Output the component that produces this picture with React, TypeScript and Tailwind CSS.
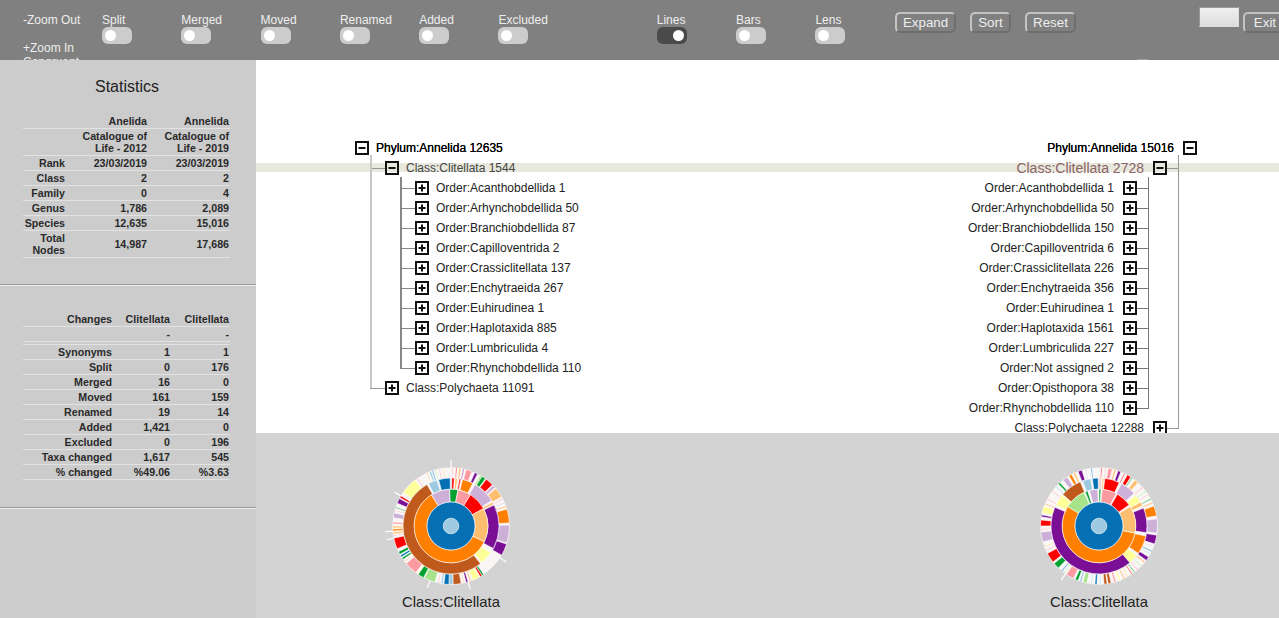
import React from 'react';

const FONT = 'font-["Liberation_Sans",Arial,sans-serif]';

const C: Record<string, string> = {
  b: '#0570b4', l: '#9ecae1', g: '#00a030', n: '#a6e38a', k: '#fb9aa0', r: '#ff0000',
  o: '#ff7f00', y: '#fdbf6f', v: '#cdb0d8', p: '#7a0f96', w: '#ffff99', x: '#c05a1c', e: '#f9f6f6',
};

type Seg = [number, number, string];

// annular sector, angles in degrees clockwise from 12 o'clock
function arc(r0: number, r1: number, a0: number, a1: number) {
  const pt = (r: number, a: number) => {
    const t = (a * Math.PI) / 180;
    return `${(r * Math.sin(t)).toFixed(2)} ${(-r * Math.cos(t)).toFixed(2)}`;
  };
  const large = a1 - a0 > 180 ? 1 : 0;
  return `M${pt(r1, a0)}A${r1} ${r1} 0 ${large} 1 ${pt(r1, a1)}L${pt(r0, a1)}A${r0} ${r0} 0 ${large} 0 ${pt(r0, a0)}Z`;
}

const LEFT_TWO: Seg[] = [[115, 328, 'o'], [328, 358, 'v'], [358, 371, 'g'], [371, 392, 'k'], [392, 422, 'r'], [422, 475, 'y']];
const LEFT_THREE: Seg[] = [
  [142, 330, 'x'], [332, 343, 'l'], [345, 359, 'b'], [361, 364, 'r'], [365, 368, 'y'], [370, 372, 'r'],
  [374, 387, 'o'], [390, 418, 'v'], [420, 423, 'y'], [424, 478, 'p'], [484, 500, 'w'],
];
const LEFT_FOUR: Seg[] = [
  [1, 2, 'k'], [5, 6, 'r'], [8, 10, 'y'], [12, 13, 'p'], [15, 21, 'k'], [24, 27, 'p'], [30, 32, 'n'], [32, 36, 'g'],
  [37, 45, 'r'], [46, 49, 'v'], [50, 60, 'y'], [62, 63, 'k'], [66, 67, 'v'], [70, 71, 'o'], [73, 87, 'o'], [89, 107, 'v'],
  [108, 120, 'p'], [146, 148, 'g'], [148, 150, 'r'], [151, 158, 'w'], [160, 161, 'o'],
  [163, 165, 'p'], [167, 168, 'y'], [170, 178, 'x'], [178, 182, 'l'], [182, 187, 'b'], [188, 190, 'l'], [192, 193, 'k'],
  [196, 207, 'n'], [208, 214, 'g'], [215, 216, 'w'], [217, 230, 'k'], [232, 233, 'y'], [235, 237, 'g'], [238, 240, 'b'],
  [241, 244, 'g'], [247, 258, 'r'], [260, 261, 'k'], [262, 264, 'y'], [265, 267, 'o'], [268, 270, 'y'], [272, 274, 'k'],
  [278, 283, 'v'], [285, 286, 'k'], [288, 289, 'g'], [293, 298, 'p'], [299, 301, 'r'], [305, 322, 'w'],
  [324, 325, 'k'], [335, 336, 'y'], [338, 340, 'l'], [341, 342, 'b'], [344, 345, 'n'], [348, 349, 'k'], [352, 353, 'y'],
];
const LEFT_SPIKES = [0, 123, 163, 201, 258, 265, 301];

const RIGHT_TWO: Seg[] = [[101, 302, 'o'], [302, 336, 'n'], [338, 342, 'g'], [345, 358, 'v'], [360, 363, 'g'], [365, 388, 'k'], [390, 415, 'r'], [418, 461, 'y']];
const RIGHT_THREE: Seg[] = [
  [139, 293, 'p'], [296, 310, 'w'], [311, 337, 'x'], [340, 350, 'l'], [352, 359, 'b'], [361, 362, 'r'], [364, 366, 'y'],
  [367, 385, 'r'], [388, 407, 'v'], [410, 420, 'w'], [420, 425, 'y'], [428, 458, 'p'], [462, 485, 'o'], [488, 500, 'w'],
];
const RIGHT_FOUR: Seg[] = [
  [2, 3, 'r'], [6, 7, 'k'], [9, 13, 'k'], [15, 17, 'y'], [19, 22, 'p'], [25, 27, 'k'], [29, 33, 'r'], [34, 35, 'g'], [38, 42, 'y'],
  [48, 49, 'k'], [53, 54, 'n'], [57, 58, 'k'], [62, 63, 'g'], [66, 67, 'o'], [70, 80, 'o'], [83, 97, 'v'], [99, 108, 'p'],
  [110, 111, 'v'], [115, 116, 'b'], [118, 119, 'l'], [122, 126, 'p'], [128, 129, 'o'], [133, 134, 'n'], [138, 139, 'k'],
  [142, 143, 'g'], [145, 146, 'r'], [150, 151, 'y'], [154, 155, 'o'], [158, 160, 'w'], [163, 165, 'k'], [168, 171, 'x'],
  [172, 175, 'x'], [178, 179, 'l'], [182, 184, 'b'], [187, 188, 'l'], [192, 196, 'n'], [198, 199, 'b'], [201, 204, 'g'],
  [206, 214, 'k'], [216, 217, 'n'], [219, 220, 'b'], [224, 230, 'g'], [232, 242, 'r'], [245, 246, 'k'], [249, 250, 'y'],
  [254, 264, 'v'], [266, 267, 'k'], [270, 276, 'r'], [279, 281, 'p'], [283, 290, 'w'], [292, 293, 'o'], [297, 298, 'k'],
  [306, 307, 'k'], [312, 313, 'l'], [316, 318, 'g'], [322, 327, 'v'], [329, 332, 'o'], [334, 336, 'y'], [339, 343, 'p'],
  [346, 347, 'v'], [352, 353, 'b'],
];
const RIGHT_SPIKES = [215];

function Sunburst({ two, three, four, spikes }: { two: Seg[]; three: Seg[]; four: Seg[]; spikes: number[] }) {
  const ring = (segs: Seg[], r0: number, r1: number) =>
    segs.map(([a0, a1, c]) => <path key={`${r0}-${a0}`} d={arc(r0, r1, a0, a1)} fill={C[c]} stroke="#fff" strokeWidth={0.6} />);
  return (
    <svg width={136} height={136} viewBox="-68 -68 136 136" className="block">
      {spikes.map(a => {
        const t = (a * Math.PI) / 180;
        return <line key={a} x1={58 * Math.sin(t)} y1={-58 * Math.cos(t)} x2={66 * Math.sin(t)} y2={-66 * Math.cos(t)} stroke="#fff" strokeWidth={1.2} />;
      })}
      <circle r={58.5} fill={C.e} />
      {ring(four, 48, 58.5)}
      {ring(three, 36.8, 48)}
      {ring(two, 24, 36.8)}
      <circle r={24} fill={C.b} stroke="#fff" strokeWidth={0.6} />
      <circle r={7.8} fill={C.l} stroke="#fff" strokeWidth={0.6} />
    </svg>
  );
}

function Toggle({ label, on }: { label: string; on?: boolean }) {
  return (
    <div className="w-[79.3px] shrink-0 pt-[13px]">
      <div className="text-xs leading-[14px] text-[#eee]">{label}</div>
      <div className={`flex h-[17px] w-[30px] items-center rounded-[6px] px-[3px] ${on ? 'justify-end bg-[#4a4a4a]' : 'bg-[#ccc]'}`}>
        <span className="h-[11px] w-[11px] rounded-full bg-white" />
      </div>
    </div>
  );
}

function Btn({ label, className }: { label: string; className?: string }) {
  return (
    <button className={`mt-[12px] h-[21px] shrink-0 rounded-[5px] border-2 border-t-[#c4c4c4] border-l-[#c4c4c4] border-r-[#6e6e6e] border-b-[#6e6e6e] px-[6px] text-[13.33px] leading-[15px] text-[#eee] ${className ?? ''}`}>
      {label}
    </button>
  );
}

function Header() {
  return (
    <header className="relative flex h-[60px] shrink-0 items-start overflow-hidden bg-[#808080] pl-[23px]">
      <div className="w-[79px] shrink-0 pt-[13px] text-xs leading-[14px] text-[#eee]">
        <div>-Zoom Out</div>
        <div className="mt-[14px]">+Zoom In</div>
        <div>Congruent</div>
      </div>
      {['Split', 'Merged', 'Moved', 'Renamed', 'Added', 'Excluded'].map(l => <Toggle key={l} label={l} />)}
      <div className="w-[79px] shrink-0" />
      <Toggle label="Lines" on />
      <Toggle label="Bars" />
      <Toggle label="Lens" />
      <Btn label="Expand" className="ml-[0.3px] w-[61px]" />
      <Btn label="Sort" className="ml-[14px] w-[41px]" />
      <Btn label="Reset" className="ml-[14px] w-[51px]" />
      <div className="ml-[123px] mt-[7px] h-[20px] w-[40px] shrink-0 border border-t-[#999] border-l-[#999] border-r-[#ddd] border-b-[#ddd] bg-gradient-to-b from-[#f0f0f0] to-[#dcdcdc]" />
      <Btn label="Exit" className="ml-[4px] w-[44px]" />
      <span className="absolute left-[1137px] top-[59px] h-px w-[11px] bg-[#a0a0a0]" />
    </header>
  );
}

type Row = [string, string, string];

function StatsTable({ rows, widths, spacer }: { rows: Row[]; widths: [string, string, string]; spacer?: number }) {
  return (
    <table className="ml-[23px] w-[207px] table-fixed border-collapse text-[10.67px] font-bold leading-[12px] text-[#2a2a2a]">
      <colgroup>
        <col className={widths[0]} />
        <col className={widths[1]} />
        <col className={widths[2]} />
      </colgroup>
      <tbody>
        {rows.map((r, i) => (
          <React.Fragment key={i}>
            <tr className="border-b border-[#e2e2e2]">
              {r.map((c, j) => (
                <td key={j} className="whitespace-pre-line p-0 py-px pr-px text-right align-middle">{c || '\u00a0'}</td>
              ))}
            </tr>
            {spacer === i && <tr className="border-b border-[#e2e2e2]"><td colSpan={3} className="h-[3px] p-0" /></tr>}
          </React.Fragment>
        ))}
      </tbody>
    </table>
  );
}

const STATS: Row[] = [
  ['', 'Anelida', 'Annelida'],
  ['', 'Catalogue of\nLife - 2012', 'Catalogue of\nLife - 2019'],
  ['Rank', '23/03/2019', '23/03/2019'],
  ['Class', '2', '2'],
  ['Family', '0', '4'],
  ['Genus', '1,786', '2,089'],
  ['Species', '12,635', '15,016'],
  ['Total\nNodes', '14,987', '17,686'],
];

const CHANGES: Row[] = [
  ['Changes', 'Clitellata', 'Clitellata'],
  ['', '-', '-'],
  ['Synonyms', '1', '1'],
  ['Split', '0', '176'],
  ['Merged', '16', '0'],
  ['Moved', '161', '159'],
  ['Renamed', '19', '14'],
  ['Added', '1,421', '0'],
  ['Excluded', '0', '196'],
  ['Taxa changed', '1,617', '545'],
  ['% changed', '%49.06', '%3.63'],
];

function Sidebar() {
  return (
    <aside className="flex w-[256px] shrink-0 flex-col bg-[#ccc]">
      <section className="h-[224px] shrink-0">
        <h2 className="pr-[2px] pt-[17px] text-center text-base leading-[20px] text-[#222]">Statistics</h2>
        <div className="h-[17px]" />
        <StatsTable rows={STATS} widths={['w-[43px]', 'w-[82px]', 'w-[82px]']} />
      </section>
      <div className="h-[2px] shrink-0 border-t border-b border-t-[#999] border-b-[#eee]" />
      <section className="h-[221px] shrink-0 pt-[26px]">
        <StatsTable rows={CHANGES} widths={['w-[90px]', 'w-[58px]', 'w-[59px]']} spacer={1} />
      </section>
      <div className="h-[2px] shrink-0 border-t border-b border-t-[#999] border-b-[#eee]" />
    </aside>
  );
}

function Box({ open }: { open?: boolean }) {
  return (
    <svg width={14} height={14} viewBox="0 0 14 14" className="block shrink-0">
      <rect x={1} y={1} width={12} height={12} fill="none" stroke="#111" strokeWidth={2} />
      <path d={open ? 'M3.5 7h7' : 'M3.5 7h7M7 3.5v7'} stroke="#111" strokeWidth={2} />
    </svg>
  );
}

const LEFT_ORDERS = [
  'Order:Acanthobdellida 1', 'Order:Arhynchobdellida 50', 'Order:Branchiobdellida 87', 'Order:Capilloventrida 2',
  'Order:Crassiclitellata 137', 'Order:Enchytraeida 267', 'Order:Euhirudinea 1', 'Order:Haplotaxida 885',
  'Order:Lumbriculida 4', 'Order:Rhynchobdellida 110',
];

const RIGHT_ORDERS = [
  'Order:Acanthobdellida 1', 'Order:Arhynchobdellida 50', 'Order:Branchiobdellida 150', 'Order:Capilloventrida 6',
  'Order:Crassiclitellata 226', 'Order:Enchytraeida 356', 'Order:Euhirudinea 1', 'Order:Haplotaxida 1561',
  'Order:Lumbriculida 227', 'Order:Not assigned 2', 'Order:Opisthopora 38', 'Order:Rhynchobdellida 110',
];

function LeftTree() {
  const stub = 'h-px w-[15px] shrink-0';
  return (
    <div className="text-xs text-[#222]">
      <div className="flex h-5 items-center gap-[7px] text-black [text-shadow:0_0_0.3px_#000]"><Box open /><span>Phylum:Annelida 12635</span></div>
      <div className="relative ml-[15px]">
        <div className="absolute left-0 top-[-3px] bottom-[10px] w-[2px] bg-[#c8c8c8]" />
        <div className="flex h-5 items-center">
          <div className={`${stub} bg-[#999]`} /><Box open /><span className="ml-[7px] text-[#444]">Class:Clitellata 1544</span>
        </div>
        <div className="relative ml-[30px]">
          <div className="absolute left-0 top-[-1px] bottom-[10px] w-[2px] bg-[#888]" />
          {LEFT_ORDERS.map(o => (
            <div key={o} className="flex h-5 items-center">
              <div className={`${stub} bg-[#888]`} /><Box /><span className="ml-[7px]">{o}</span>
            </div>
          ))}
        </div>
        <div className="flex h-5 items-center">
          <div className={`${stub} bg-[#999]`} /><Box /><span className="ml-[7px]">Class:Polychaeta 11091</span>
        </div>
      </div>
    </div>
  );
}

function RightTree() {
  const stub = 'h-px w-[12px] shrink-0';
  return (
    <div className="text-xs text-[#222]">
      <div className="flex h-5 items-center justify-end gap-[9px] text-black [text-shadow:0_0_0.3px_#000]"><span>Phylum:Annelida 15016</span><Box open /></div>
      <div className="relative mr-[18px]">
        <div className="absolute right-0 top-[-3px] bottom-[10px] w-px bg-[#999]" />
        <div className="flex h-5 items-center justify-end">
          <span className="mr-[9px] text-sm text-[#8a6464]">Class:Clitellata 2728</span><Box open /><div className={`${stub} bg-[#999]`} />
        </div>
        <div className="relative mr-[30px]">
          <div className="absolute right-0 top-[-1px] bottom-[10px] w-px bg-[#777]" />
          {RIGHT_ORDERS.map(o => (
            <div key={o} className="flex h-5 items-center justify-end">
              <span className="mr-[9px]">{o}</span><Box /><div className={`${stub} bg-[#777]`} />
            </div>
          ))}
        </div>
        <div className="flex h-5 items-center justify-end">
          <span className="mr-[9px]">Class:Polychaeta 12288</span><Box /><div className={`${stub} bg-[#999]`} />
        </div>
      </div>
    </div>
  );
}

export default function App() {
  return (
    <div className={`flex h-[618px] w-[1279px] flex-col overflow-hidden bg-white ${FONT}`}>
      <Header />
      <div className="flex min-h-0 flex-1">
        <Sidebar />
        <main className="flex min-w-0 flex-1 flex-col">
          <div className="relative flex h-[373px] shrink-0 items-start justify-between overflow-hidden bg-white pl-[99px] pr-[82px] pt-[78px]">
            <div className="absolute inset-x-0 top-[103px] h-[9px] bg-[#e8e8dc]" />
            <div className="relative"><LeftTree /></div>
            <div className="relative w-[260px]"><RightTree /></div>
          </div>
          <div className="flex flex-1 bg-[#d3d3d3] pl-[127px] pt-[25px]">
            <div className="flex w-[136px] shrink-0 flex-col items-center">
              <Sunburst two={LEFT_TWO} three={LEFT_THREE} four={LEFT_FOUR} spikes={LEFT_SPIKES} />
              <div className="whitespace-nowrap text-[14.8px] leading-[16px] text-[#222]">Class:Clitellata</div>
            </div>
            <div className="ml-[512px] flex w-[136px] shrink-0 flex-col items-center">
              <Sunburst two={RIGHT_TWO} three={RIGHT_THREE} four={RIGHT_FOUR} spikes={RIGHT_SPIKES} />
              <div className="whitespace-nowrap text-[14.8px] leading-[16px] text-[#222]">Class:Clitellata</div>
            </div>
          </div>
        </main>
      </div>
    </div>
  );
}
